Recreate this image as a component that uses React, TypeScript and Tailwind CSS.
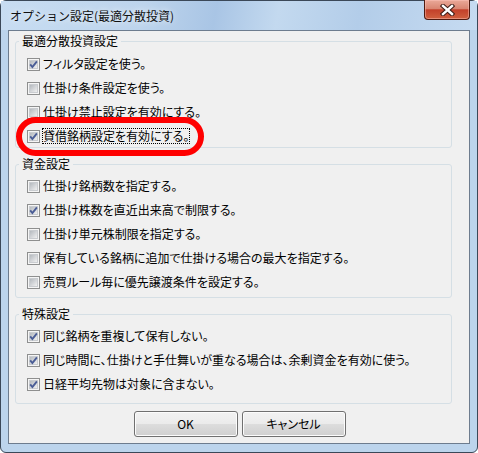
import React from "react";

const CB = ({ checked }: { checked: boolean }) => (
  <svg width="13" height="13" viewBox="0 0 13 13" className="shrink-0 block">
    <defs>
      <linearGradient id="cbg" x1="0" y1="0" x2="1" y2="1">
        <stop offset="0" stopColor="#b0b5bb" />
        <stop offset="1" stopColor="#f4f4f4" />
      </linearGradient>
    </defs>
    <rect x="0.5" y="0.5" width="12" height="12" fill="#f5f5f5" stroke="#8e8f8f" />
    <rect x="2.5" y="2.5" width="8" height="8" fill="url(#cbg)" stroke="#c9ccd0" />
    {checked && (
      <path d="M3.2 6.4 L5.4 9 L9.9 3.4" fill="none" stroke="#4a5d96" strokeWidth="1.9" strokeLinejoin="miter" />
    )}
  </svg>
);

const Row = ({ checked, label, focus }: { checked: boolean; label: string; focus?: boolean }) => (
  <div className="flex h-[16px] items-center">
    <CB checked={checked} />
    <span
      className={
        focus
          ? "ml-[2px] border border-dotted border-black leading-[14px] whitespace-nowrap"
          : "ml-[2px] border border-transparent leading-[14px] whitespace-nowrap"
      }
    >
      {label}
    </span>
  </div>
);

const Group = ({
  title,
  className,
  bodyClass,
  children,
}: {
  title: string;
  className: string;
  bodyClass: string;
  children: React.ReactNode;
}) => (
  <fieldset className={"ml-[6px] w-[437px] rounded-[3px] border border-[#d5dfe5] px-[3px] " + className}>
    <legend className="px-[3px] leading-[14px]">{title}</legend>
    <div className={"flex flex-col gap-[8px] pl-[8px] " + bodyClass}>{children}</div>
  </fieldset>
);

export default function App() {
  return (
    <div className="relative h-[453px] w-[478px] overflow-hidden">
      <div className="flex h-[453px] w-[478px] flex-col rounded-[6px] border border-[#3b4858] bg-[#bcd4ec] px-[7px] pb-[8px] [font-family:'Noto_Sans_CJK_JP',sans-serif]">
        {/* Title bar */}
        <div className="relative -mx-[7px] flex h-[29px] items-center bg-[linear-gradient(100deg,#c8ddf2_0%,#bdd4ec_30%,#a9c5e5_45%,#c3d9ef_58%,#b3cde9_75%,#c6dbf1_100%)] pl-[9px]">
          <span className="text-[12px] text-[#101010] [text-shadow:0_0_6px_rgba(255,255,255,0.9)]">
            オプション設定(最適分散投資)
          </span>
        </div>
        {/* Client */}
        <div className="flex h-[414px] flex-col border border-[#6d7c8e] bg-[#f0f0f0] text-[12px] text-black [font-feature-settings:'palt']">
          <Group title="最適分散投資設定" className="mt-[3px]" bodyClass="pt-[8px] pb-[3px]">
            <Row checked label="フィルタ設定を使う。" />
            <Row checked={false} label="仕掛け条件設定を使う。" />
            <Row checked={false} label="仕掛け禁止設定を有効にする。" />
            <Row checked label="貸借銘柄設定を有効にする。" focus />
          </Group>
          <Group title="資金設定" className="mt-[9px]" bodyClass="pt-[7px] pb-[7px]">
            <Row checked={false} label="仕掛け銘柄数を指定する。" />
            <Row checked label="仕掛け株数を直近出来高で制限する。" />
            <Row checked={false} label="仕掛け単元株制限を指定する。" />
            <Row checked={false} label="保有している銘柄に追加で仕掛ける場合の最大を指定する。" />
            <Row checked={false} label="売買ルール毎に優先譲渡条件を設定する。" />
          </Group>
          <Group title="特殊設定" className="mt-[9px]" bodyClass="pt-[7px] pb-[11px]">
            <Row checked label="同じ銘柄を重複して保有しない。" />
            <Row checked label="同じ時間に、仕掛けと手仕舞いが重なる場合は、余剰資金を有効に使う。" />
            <Row checked label="日経平均先物は対象に含まない。" />
          </Group>
          <div className="mt-[7px] flex justify-center gap-[4px] pl-[1px]">
            <button className="h-[26px] w-[104px] rounded-[3px] border border-[#707070] bg-[linear-gradient(#f2f2f2_0%,#ebebeb_50%,#dddddd_50%,#cfcfcf_100%)] shadow-[inset_0_0_0_1px_#fcfcfc] text-[12px]">
              OK
            </button>
            <button className="h-[26px] w-[104px] rounded-[3px] border border-[#707070] bg-[linear-gradient(#f2f2f2_0%,#ebebeb_50%,#dddddd_50%,#cfcfcf_100%)] shadow-[inset_0_0_0_1px_#fcfcfc] text-[12px]">
              キャンセル
            </button>
          </div>
        </div>
      </div>
      {/* Close button */}
      <div className="absolute right-[8px] top-0 flex h-[20px] w-[46px] items-center justify-center rounded-b-[4px] border border-t-0 border-[#4f1a10] bg-[linear-gradient(#eaa999_0%,#d98672_45%,#c3402a_52%,#d0603f_100%)] shadow-[inset_0_0_0_1px_rgba(255,200,190,0.45)]">
        <svg width="15" height="12" viewBox="0 0 15 12">
          <path d="M3 2 L12 10 M12 2 L3 10" stroke="#3a1a14" strokeWidth="4.4" strokeLinecap="square" />
          <path d="M3 2 L12 10 M12 2 L3 10" stroke="#ffffff" strokeWidth="2.4" strokeLinecap="square" />
        </svg>
      </div>
      {/* Red annotation */}
      <div className="pointer-events-none absolute left-[16px] top-[117px] h-[39px] w-[188px] rounded-full border-[6px] border-[#ff0000]" />
    </div>
  );
}
